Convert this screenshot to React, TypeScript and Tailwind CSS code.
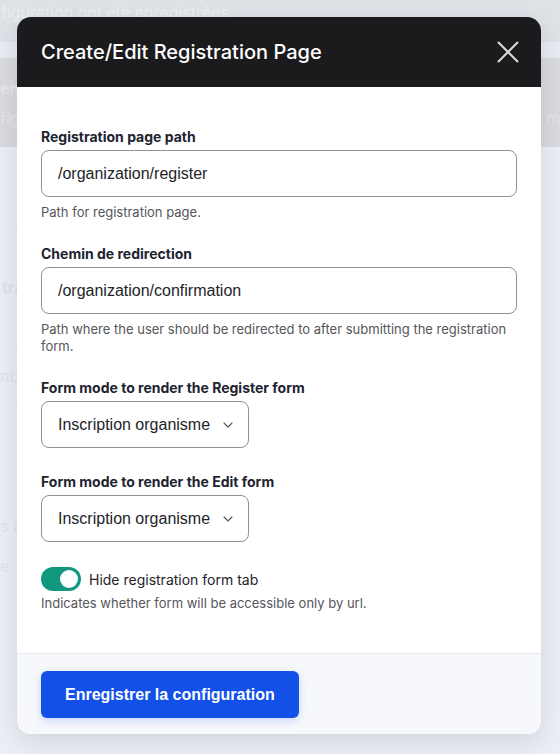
import { X, ChevronDown } from 'lucide-react';

const inter = "font-['Inter','Noto_Sans',sans-serif]";
const arial = "font-['Liberation_Sans','Arial',sans-serif]";

function Label({ children }: { children: React.ReactNode }) {
  return <div className={`${inter} mb-[3px] text-[14px] font-bold leading-5 text-[#222330]`}>{children}</div>;
}

function Help({ children, className = 'mt-[7px]' }: { children: React.ReactNode; className?: string }) {
  return <div className={`${inter} ${className} text-[13px] leading-[17px] text-[#55565b]`}>{children}</div>;
}

function TextInput({ value }: { value: string }) {
  return (
    <div className={`${arial} flex h-[47px] items-center rounded-lg border border-[#8e929c] bg-white px-4 text-[16px] text-[#232429]`}>
      {value}
    </div>
  );
}

function Select({ value }: { value: string }) {
  return (
    <div className={`${arial} flex h-[47px] w-[208px] items-center justify-between rounded-lg border border-[#8e929c] bg-white pl-4 pr-3 text-[16px] text-[#232429]`}>
      <span>{value}</span>
      <ChevronDown size={16} strokeWidth={1.6} className="text-[#55565b]" />
    </div>
  );
}

export default function App() {
  return (
    <div className="relative h-[754px] w-[560px] overflow-hidden bg-[#eceef5]">
      {/* page behind the overlay */}
      <div className="h-[42px] bg-[#dce2e6] pt-[2px]">
        <span className={`${inter} block whitespace-nowrap pl-px text-[16px] leading-5 text-[#e9eef1]`}>figuration ont été enregistrées</span>
      </div>
      <div className="h-[16px] bg-[#e9ebf1]" />
      <div className={`${inter} flex h-[89px] justify-between bg-[#d9dade] pt-[18px] text-[16px] text-[#e4e5e8]`}>
        <div className="flex flex-col">
          <span className="font-bold leading-6">em</span>
          <span className="mt-[6px] leading-6">fig</span>
        </div>
        <span className="mt-[30px] whitespace-nowrap leading-6">s m</span>
      </div>
      <div className="h-[83px] border-b border-[#e8eaf1]" />
      <div className={`${inter} flex h-[115px] items-center border-b border-[#e8eaf1] text-[16px] font-bold text-[#dde1ea]`}>
        <span className="pl-[2px]">tra</span>
      </div>
      <div className={`${inter} flex h-[62px] items-center border-b border-[#e8eaf1] text-[16px] text-[#dde1ea]`}>
        <span>niz</span>
      </div>
      <div className={`${inter} flex flex-col gap-4 pt-[107px] text-[16px] leading-6 text-[#dde1ea]`}>
        <span>s a</span>
        <span>e</span>
      </div>

      {/* modal */}
      <div className="absolute left-[17px] top-[17px] w-[524px] overflow-hidden rounded-[14px] bg-white shadow-[0_8px_24px_rgba(30,35,60,0.12)]">
        <div className="flex h-[70px] items-center justify-between bg-[#1b1b1d] pl-6 pr-[14px]">
          <h2 className={`${inter} text-[20px] font-medium text-white`}>Create/Edit Registration Page</h2>
          <X size={38} strokeWidth={1.25} className="text-[#dcdcdc]" />
        </div>

        <div className="px-6 pb-[41px] pt-10">
          <div className="mb-[23px]">
            <Label>Registration page path</Label>
            <TextInput value="/organization/register" />
            <Help>Path for registration page.</Help>
          </div>

          <div className="mb-[23px]">
            <Label>Chemin de redirection</Label>
            <TextInput value="/organization/confirmation" />
            <Help>Path where the user should be redirected to after submitting the registration form.</Help>
          </div>

          <div className="mb-6">
            <Label>Form mode to render the Register form</Label>
            <Select value="Inscription organisme" />
          </div>

          <div className="mb-[25px]">
            <Label>Form mode to render the Edit form</Label>
            <Select value="Inscription organisme" />
          </div>

          <div>
            <div className="flex items-center gap-2">
              <div className="flex h-6 w-10 items-center justify-end rounded-full bg-[#12977f] pr-[3px]">
                <div className="h-[18px] w-[18px] rounded-full bg-white" />
              </div>
              <span className={`${inter} text-[14px] text-[#232429]`}>Hide registration form tab</span>
            </div>
            <Help className="mt-1">Indicates whether form will be accessible only by url.</Help>
          </div>
        </div>

        <div className="border-t border-[#e6e8ef] bg-[#f7f8fc] px-6 pb-4 pt-[17px]">
          <button
            type="button"
            className={`${arial} h-[47px] rounded-md bg-[#1250e8] px-6 text-[16px] font-bold text-white shadow-[0_3px_8px_rgba(18,80,232,0.2)]`}
          >
            Enregistrer la configuration
          </button>
        </div>
      </div>
    </div>
  );
}
